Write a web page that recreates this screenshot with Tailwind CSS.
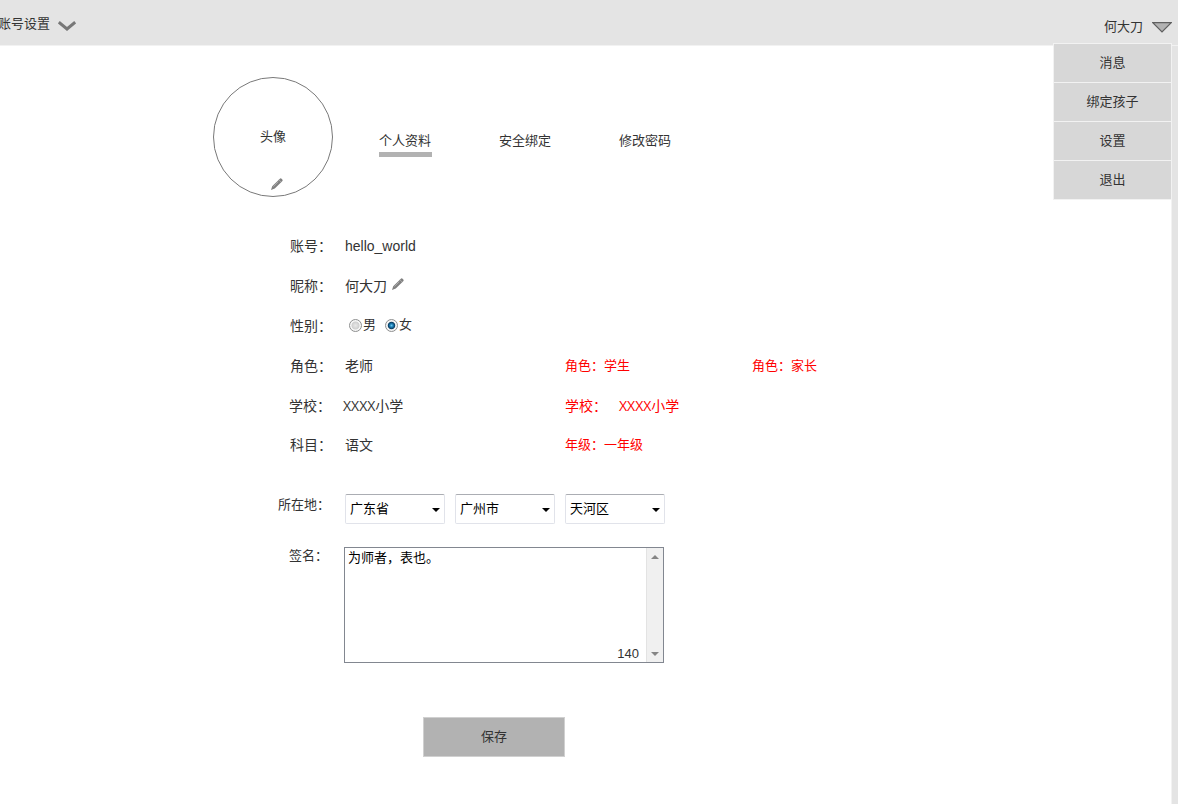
<!DOCTYPE html>
<html lang="zh-CN">
<head>
<meta charset="utf-8">
<title>账号设置</title>
<script src="https://cdn.jsdelivr.net/npm/@tailwindcss/browser@4"></script>
</head>
<body class="flex min-h-screen flex-col bg-white font-['Liberation_Sans','Noto_Sans_CJK_SC',sans-serif] text-[13px] leading-5 text-[#333333]">
<header class="relative z-10 flex h-[46px] items-start justify-between border-b border-[#f2f2f2] bg-[#e4e4e4] pt-3.5 pr-1.5">
  <button type="button" class="-ml-0.5 flex items-center gap-2 leading-5">
    账号设置
    <svg class="mt-1 h-2.5 w-[18px]" viewBox="0 0 18 10" fill="none" stroke="#777777" stroke-width="3" aria-hidden="true"><path d="M0.8 1.2 L9 8 L17.2 1.2"/></svg>
  </button>
  <div class="relative pt-[3px]">
    <button type="button" class="flex items-center gap-[9px] leading-5">
      何大刀
      <svg class="h-[11px] w-5" viewBox="0 0 20 11" aria-hidden="true"><path d="M0.8 .7 H19.2 L10 10 Z" fill="#b2b2b2" stroke="#606060" stroke-width="1.2"/></svg>
    </button>
    <nav class="absolute top-[29px] right-0 w-[119px] border border-b-0 border-[#f2f2f2] bg-[#d7d7d7] text-center">
      <a href="#" class="block border-b border-[#f2f2f2] py-[9px]">消息</a>
      <a href="#" class="block border-b border-[#f2f2f2] py-[9px]">绑定孩子</a>
      <a href="#" class="block border-b border-[#f2f2f2] py-[9px]">设置</a>
      <a href="#" class="block border-b border-[#f2f2f2] py-[9px]">退出</a>
    </nav>
  </div>
</header>
<div class="flex grow">
  <main class="grow pt-[31px] pl-[213px]">
    <div class="flex items-start">
      <div class="flex size-[120px] flex-col items-center rounded-full border border-[#797979] pt-[49px]">
        <span>头像</span>
        <button type="button" aria-label="修改头像" class="mt-[31px] ml-2">
          <svg class="size-3" viewBox="0 0 12 12" fill="#808080" aria-hidden="true"><path d="M0 12 L1.2 8.2 L8.6 .9 Q9.6 -.1 10.6 .7 L11.3 1.4 Q12.1 2.3 11.2 3.3 L3.8 10.6 Z"/><path d="M7.9 1.8 L10.2 4.1 M2.4 8.6 L7.2 3.8" fill="none" stroke="#c4c4c4" stroke-width=".6"/></svg>
        </button>
      </div>
      <nav class="mt-[54px] ml-[46px] flex gap-[67px]">
        <a href="#" class="border-b-5 border-[#b2b2b2] pr-px pb-px">个人资料</a>
        <a href="#">安全绑定</a>
        <a href="#" class="ml-px">修改密码</a>
      </nav>
    </div>
    <form class="-mt-px pt-[30px]">
      <div class="flex h-10 items-center gap-[13px] text-sm"><span class="w-[119px] text-right">账号：</span><span>hello_world</span></div>
      <div class="flex h-10 items-center gap-[13px] text-sm"><span class="w-[119px] text-right">昵称：</span>
        <span class="flex items-center gap-[5px]">何大刀
          <button type="button" aria-label="修改昵称" class="pb-1"><svg class="size-3" viewBox="0 0 12 12" fill="#808080" aria-hidden="true"><path d="M0 12 L1.2 8.2 L8.6 .9 Q9.6 -.1 10.6 .7 L11.3 1.4 Q12.1 2.3 11.2 3.3 L3.8 10.6 Z"/><path d="M7.9 1.8 L10.2 4.1 M2.4 8.6 L7.2 3.8" fill="none" stroke="#c4c4c4" stroke-width=".6"/></svg></button>
        </span>
      </div>
      <div class="flex h-10 items-center gap-[17px] text-sm"><span class="w-[119px] text-right">性别：</span>
        <span class="flex gap-[9px] pb-0.5 text-[13px]">
          <label class="flex items-center gap-px"><input type="radio" name="sex" class="size-[13px] appearance-none rounded-full border border-[#8e8f8f] bg-[radial-gradient(circle_closest-side,#e8e8e8_0%,#cfcfcf_65%,#f6f6f6_80%)] checked:bg-[radial-gradient(circle_closest-side,#6cc8f0_0%,#1c7fb5_30%,#0b3d62_60%,#f4f4f4_76%)]">男</label>
          <label class="flex items-center gap-px"><input type="radio" name="sex" checked class="size-[13px] appearance-none rounded-full border border-[#8e8f8f] bg-[radial-gradient(circle_closest-side,#e8e8e8_0%,#cfcfcf_65%,#f6f6f6_80%)] checked:bg-[radial-gradient(circle_closest-side,#6cc8f0_0%,#1c7fb5_30%,#0b3d62_60%,#f4f4f4_76%)]">女</label>
        </span>
      </div>
      <div class="flex h-10 items-center gap-[13px] text-sm"><span class="w-[119px] text-right">角色：</span>
        <span class="flex items-center"><span class="w-[220px]">老师</span><span class="w-[187px] text-[13px] text-[#ff0000]">角色：学生</span><span class="text-[13px] text-[#ff0000]">角色：家长</span></span>
      </div>
      <div class="flex h-10 items-center gap-3 text-sm"><span class="w-[118px] text-right">学校：</span>
        <span class="flex items-center"><span class="w-[222px]"><span class="font-['Open_Sans']">XXXX</span>小学</span><span class="flex gap-3 text-[#ff0000]"><span>学校：</span><span><span class="font-['Open_Sans']">XXXX</span>小学</span></span></span>
      </div>
      <div class="flex h-[38px] items-center gap-[13px] text-sm"><span class="w-[119px] text-right">科目：</span>
        <span class="flex items-center"><span class="w-[220px]">语文</span><span class="text-[13px] text-[#ff0000]">年级：一年级</span></span>
      </div>
      <div class="mt-[30px] flex items-start gap-[15px]"><span class="w-[117px] pt-px text-right">所在地：</span>
        <div class="flex gap-2.5 text-black">
          <div class="relative"><select aria-label="省" class="h-[30px] w-[100px] appearance-none rounded-[2px] border border-[#e1e3ea] border-t-[#abadb3] bg-white pl-1 text-[13px]"><option>广东省</option></select><svg class="pointer-events-none absolute top-3.5 right-[5px] h-1 w-2" viewBox="0 0 8 4" aria-hidden="true"><path d="M0 0 H8 L4 4 Z"/></svg></div>
          <div class="relative"><select aria-label="市" class="h-[30px] w-[100px] appearance-none rounded-[2px] border border-[#e1e3ea] border-t-[#abadb3] bg-white pl-1 text-[13px]"><option>广州市</option></select><svg class="pointer-events-none absolute top-3.5 right-[5px] h-1 w-2" viewBox="0 0 8 4" aria-hidden="true"><path d="M0 0 H8 L4 4 Z"/></svg></div>
          <div class="relative"><select aria-label="区" class="h-[30px] w-[100px] appearance-none rounded-[2px] border border-[#e1e3ea] border-t-[#abadb3] bg-white pl-1 text-[13px]"><option>天河区</option></select><svg class="pointer-events-none absolute top-3.5 right-[5px] h-1 w-2" viewBox="0 0 8 4" aria-hidden="true"><path d="M0 0 H8 L4 4 Z"/></svg></div>
        </div>
      </div>
      <div class="mt-[23px] flex items-start gap-4"><label for="sign" class="w-[115px] text-right leading-[18px]">签名：</label>
        <div class="relative flex h-[116px] w-80 border border-[#828790]">
          <textarea id="sign" class="grow resize-none overflow-hidden bg-white pl-[3px] leading-5 text-black outline-none">为师者，表也。</textarea>
          <div class="flex w-[17px] flex-col items-center justify-between border-l border-[#e3e3e3] bg-[#f0f0f0] pt-[7px] pb-1.5" aria-hidden="true">
            <svg class="h-1 w-2" viewBox="0 0 8 4"><path d="M0 4 H8 L4 0 Z" fill="#858585"/></svg>
            <svg class="h-1 w-2" viewBox="0 0 8 4"><path d="M0 0 H8 L4 4 Z" fill="#858585"/></svg>
          </div>
          <span class="absolute right-6 bottom-0 leading-4">140</span>
        </div>
      </div>
      <button type="submit" class="mt-[54px] ml-[210px] h-10 w-[142px] border border-[#d0d0d0] bg-[#b2b2b2]">保存</button>
    </form>
  </main>
  <aside class="w-[7px] border-l border-[#f2f2f2] bg-[#e4e4e4]"></aside>
</div>
</body>
</html>
